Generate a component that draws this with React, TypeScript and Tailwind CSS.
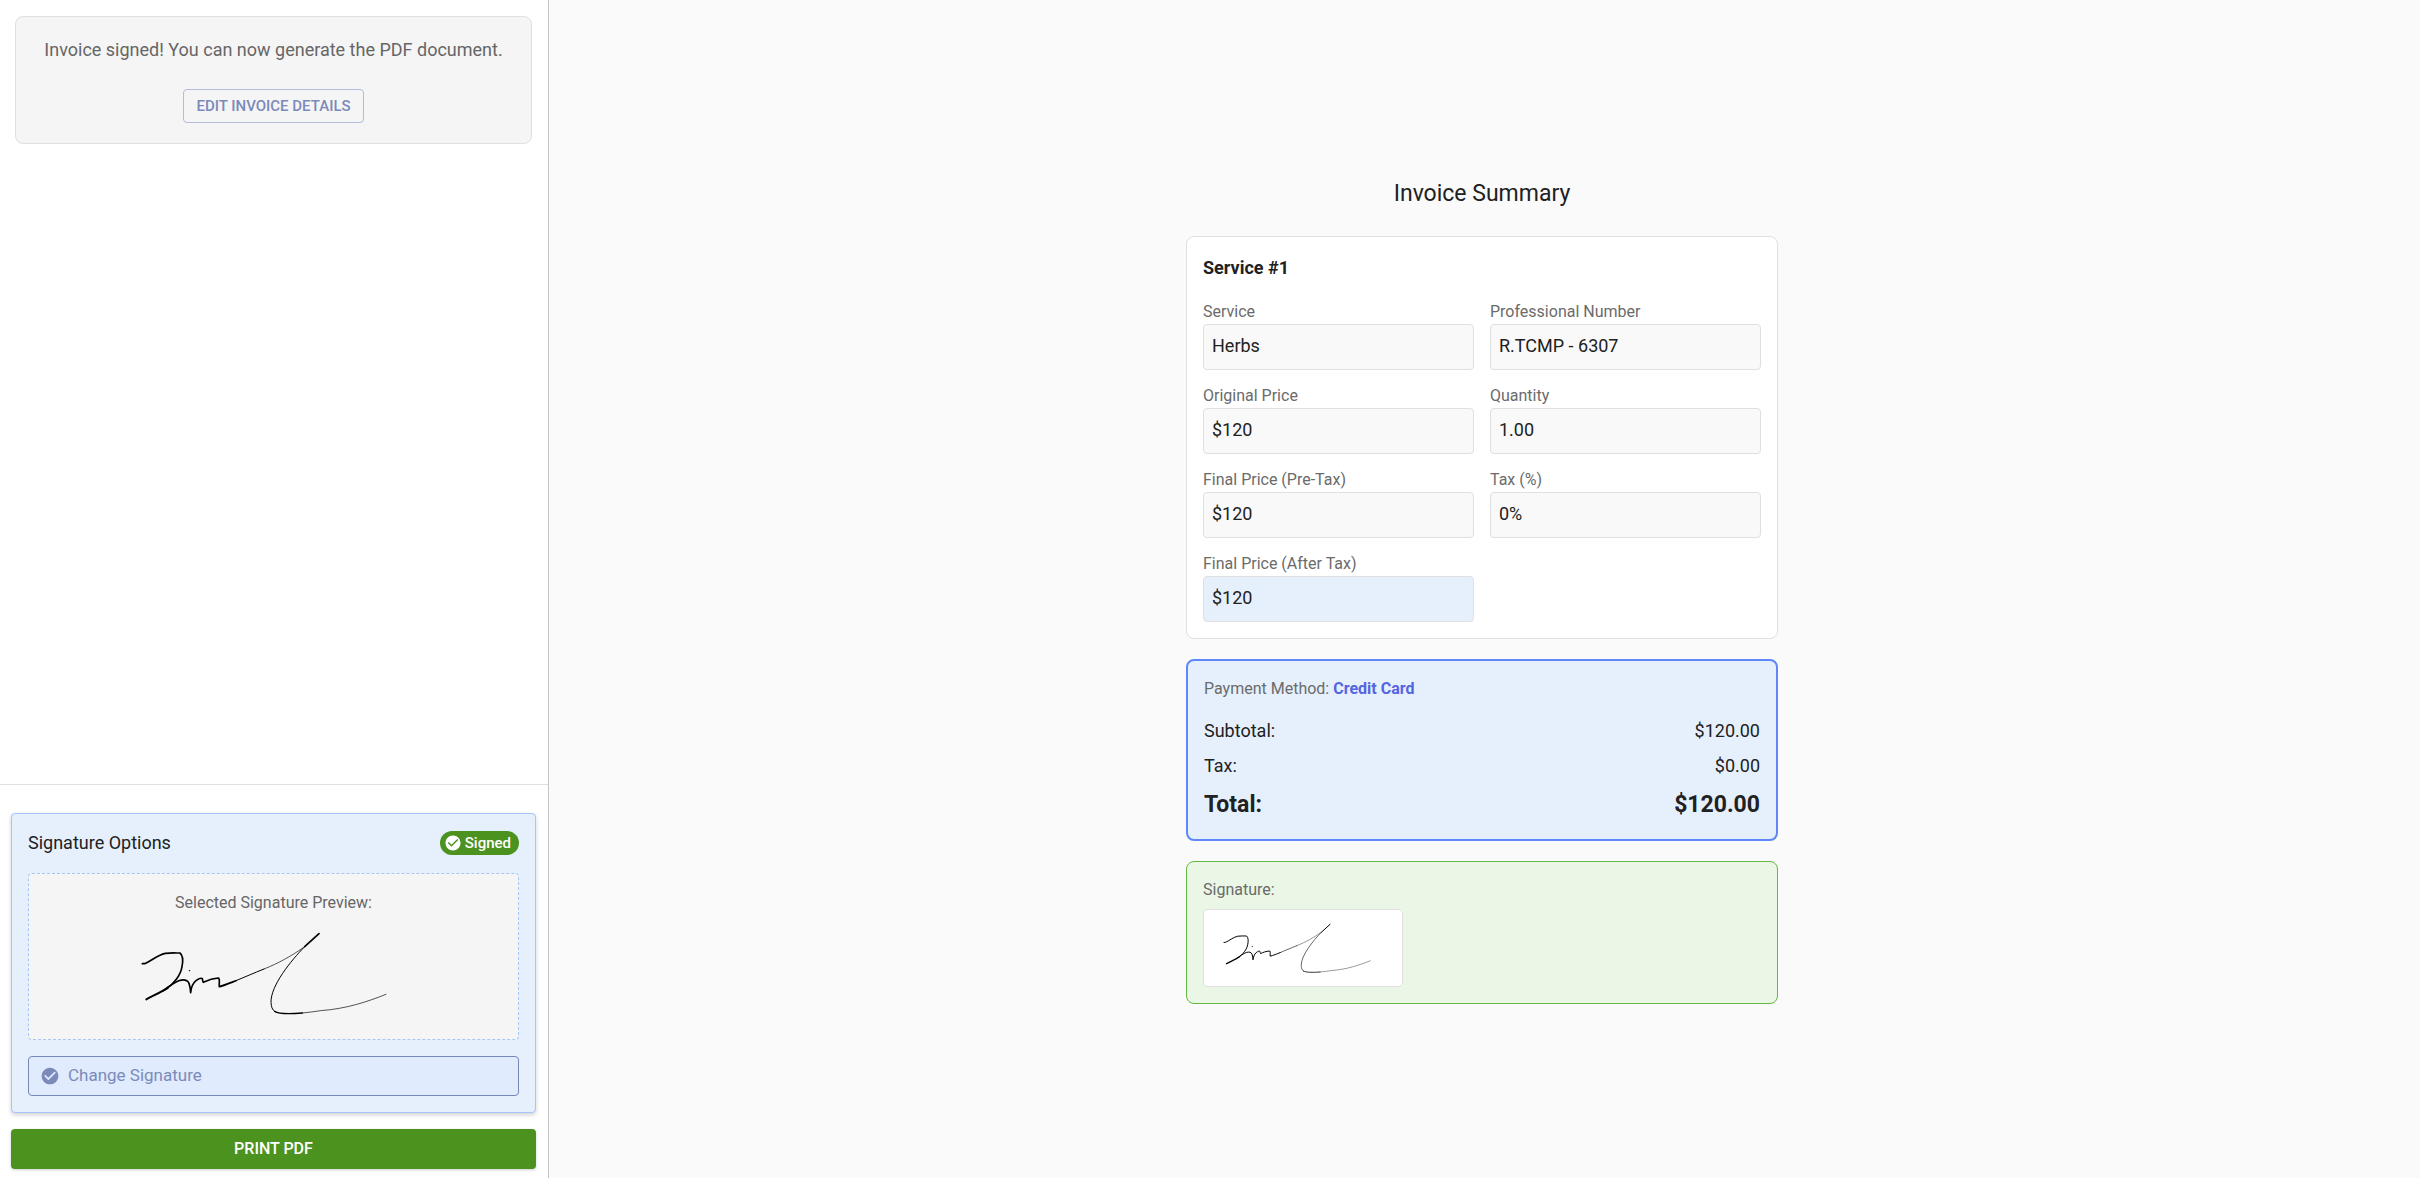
import React from "react";
import { MdCheckCircle } from "react-icons/md";

type Field = {
  id: string;
  label: string;
  value: string;
  highlight?: boolean;
};

const fields: Field[] = [
  { id: "service", label: "Service", value: "Herbs" },
  { id: "professional-number", label: "Professional Number", value: "R.TCMP - 6307" },
  { id: "original-price", label: "Original Price", value: "$120" },
  { id: "quantity", label: "Quantity", value: "1.00" },
  { id: "pre-tax", label: "Final Price (Pre-Tax)", value: "$120" },
  { id: "tax", label: "Tax (%)", value: "0%" },
  { id: "after-tax", label: "Final Price (After Tax)", value: "$120", highlight: true },
];

const Signature = ({ className }: { className: string }) => (
  <svg
    viewBox="7 24 906 300"
    className={className}
    fill="none"
    stroke="#000"
    strokeLinecap="round"
    strokeLinejoin="round"
    role="img"
    aria-label="Signature"
  >
    <path
      strokeWidth="5"
      d="M65 146 L72 146 C92 138 108 121 134 115 C150 113 165 114 178 114 C187 121 187 140 184 155 C180 182 158 207 138 221"
    />
    <path strokeWidth="6" d="M142 218 C122 232 95 243 77 253" />
    <path
      strokeWidth="5"
      d="M128 227 C150 210 162 202 178 196 C192 193 200 194 205 205 C208 215 210 225 210 233 C211 222 216 205 226 197 C236 190 241 188 245 191 C246 196 246 200 248 202 C260 196 275 190 294 189 C299 197 294 208 296 215 C312 211 328 204 346 197"
    />
    <path strokeWidth="3" d="M346 197 C370 187 400 174 430 162" />
    <path strokeWidth="2" d="M430 162 C475 144 510 124 548 98" />
    <path strokeWidth="5" d="M595 56 L552 95" />
    <path strokeWidth="3" d="M552 95 C510 138 450 212 451 262 C452 275 454 284 462 289" />
    <path strokeWidth="4" d="M462 289 C475 298 520 296 545 294" />
    <path strokeWidth="2" d="M545 294 C565 292 580 290 600 287 C680 281 740 260 796 238" />
    <circle cx="206" cy="167" r="1" strokeWidth="2" />
  </svg>
);

const Sidebar = () => (
  <aside className="flex w-[549px] shrink-0 flex-col border-r border-[#c4c4c4] bg-white">
    <div className="flex-1 pt-4 pr-4 pl-[15px]">
      <div className="flex flex-col items-center rounded-lg border border-[#e0e0e0] bg-[#f5f5f5] py-5">
        <p className="text-lg leading-[26px] text-[#666666]">
          Invoice signed! You can now generate the PDF document.
        </p>
        <button
          type="button"
          className="mt-[26px] h-[34px] rounded-[4px] border border-[#b3bddb] px-3 text-[15px] font-medium text-[#7b8abb]"
        >
          EDIT INVOICE DETAILS
        </button>
      </div>
    </div>

    <div className="border-t border-[#e0e0e0] pt-7 pr-3 pb-[9px] pl-[11px]">
      <section className="rounded-[4px] border border-[#a6c5fb] bg-[#e6f0fd] p-4 shadow-[0_2px_4px_rgba(0,0,0,0.18)]">
        <div className="flex h-[26px] items-center justify-between">
          <h2 className="text-lg text-[#212121]">Signature Options</h2>
          <span className="flex h-6 items-center gap-[3px] rounded-full bg-[#4c921f] pr-2 pl-1 text-[15px] font-medium text-white">
            <MdCheckCircle className="size-[18px]" />
            Signed
          </span>
        </div>

        <div className="mt-[17px] flex flex-col items-center rounded-[4px] border border-dashed border-[#a6c5fb] bg-[#f5f5f5] p-4">
          <p className="text-base leading-[26px] text-[#666666]">Selected Signature Preview:</p>
          <Signature className="mt-[7px] h-[100px] w-[302px]" />
        </div>

        <button
          type="button"
          className="mt-4 flex h-10 w-full items-center gap-2 rounded-[4px] border border-[#7787b8] bg-[#e0ebfd] px-[11px] text-[17px] text-[#7b8abb]"
        >
          <MdCheckCircle className="size-5" />
          Change Signature
        </button>
      </section>

      <button
        type="button"
        className="mt-4 h-10 w-full rounded-[4px] bg-[#4c921f] text-base font-medium text-white shadow-[0_1px_3px_rgba(0,0,0,0.2)]"
      >
        PRINT PDF
      </button>
    </div>
  </aside>
);

const ReadOnlyField = ({ id, label, value, highlight }: Field) => (
  <div>
    <label htmlFor={id} className="block h-[22px] text-base leading-5 text-[#6b6b6b]">
      {label}
    </label>
    <input
      id={id}
      readOnly
      value={value}
      className={`block h-[46px] w-full rounded-[4px] border border-[#e0e0e0] px-2 pb-[3px] text-lg text-[#212121] outline-none ${
        highlight ? "bg-[#e6f0fd]" : "bg-[#f9f9f9]"
      }`}
    />
  </div>
);

const InvoiceSummary = () => (
  <main className="flex flex-1 flex-col items-center justify-center bg-[#fafafa] pt-[2px] pr-[5px]">
    <div className="flex w-full max-w-[592px] flex-col gap-5">
      <h1 className="mb-1 text-center text-[23px] leading-9 text-[#212121]">Invoice Summary</h1>

      <section className="rounded-lg border border-[#e0e0e0] bg-white p-4">
        <h2 className="mb-[19px] text-lg leading-[30px] font-bold text-[#212121]">Service #1</h2>
        <div className="grid grid-cols-2 gap-4">
          {fields.map((field) => (
            <ReadOnlyField key={field.id} {...field} />
          ))}
        </div>
      </section>

      <section className="rounded-lg border-2 border-[#5f87fb] bg-[#e6f0fd] p-4 text-[#212121]">
        <p className="text-base leading-6 text-[#6b6b6b]">
          Payment Method: <strong className="font-bold text-[#5465e0]">Credit Card</strong>
        </p>
        <dl className="mt-4 flex flex-col gap-2">
          <div className="flex justify-between text-lg leading-[27px]">
            <dt>Subtotal:</dt>
            <dd>$120.00</dd>
          </div>
          <div className="flex justify-between text-lg leading-[27px]">
            <dt>Tax:</dt>
            <dd>$0.00</dd>
          </div>
          <div className="flex justify-between text-[23px] leading-9 font-bold">
            <dt>Total:</dt>
            <dd>$120.00</dd>
          </div>
        </dl>
      </section>

      <section className="rounded-lg border border-[#66b840] bg-[#eaf6e6] p-4">
        <p className="mb-[7px] text-base leading-6 text-[#6b6b6b]">Signature:</p>
        <div className="w-fit rounded-[4px] border border-[#e0e0e0] bg-white p-2">
          <Signature className="h-[60px] w-[182px]" />
        </div>
      </section>
    </div>
  </main>
);

export default function App() {
  return (
    <div className="flex min-h-screen font-[Roboto,sans-serif]">
      <Sidebar />
      <InvoiceSummary />
    </div>
  );
}
